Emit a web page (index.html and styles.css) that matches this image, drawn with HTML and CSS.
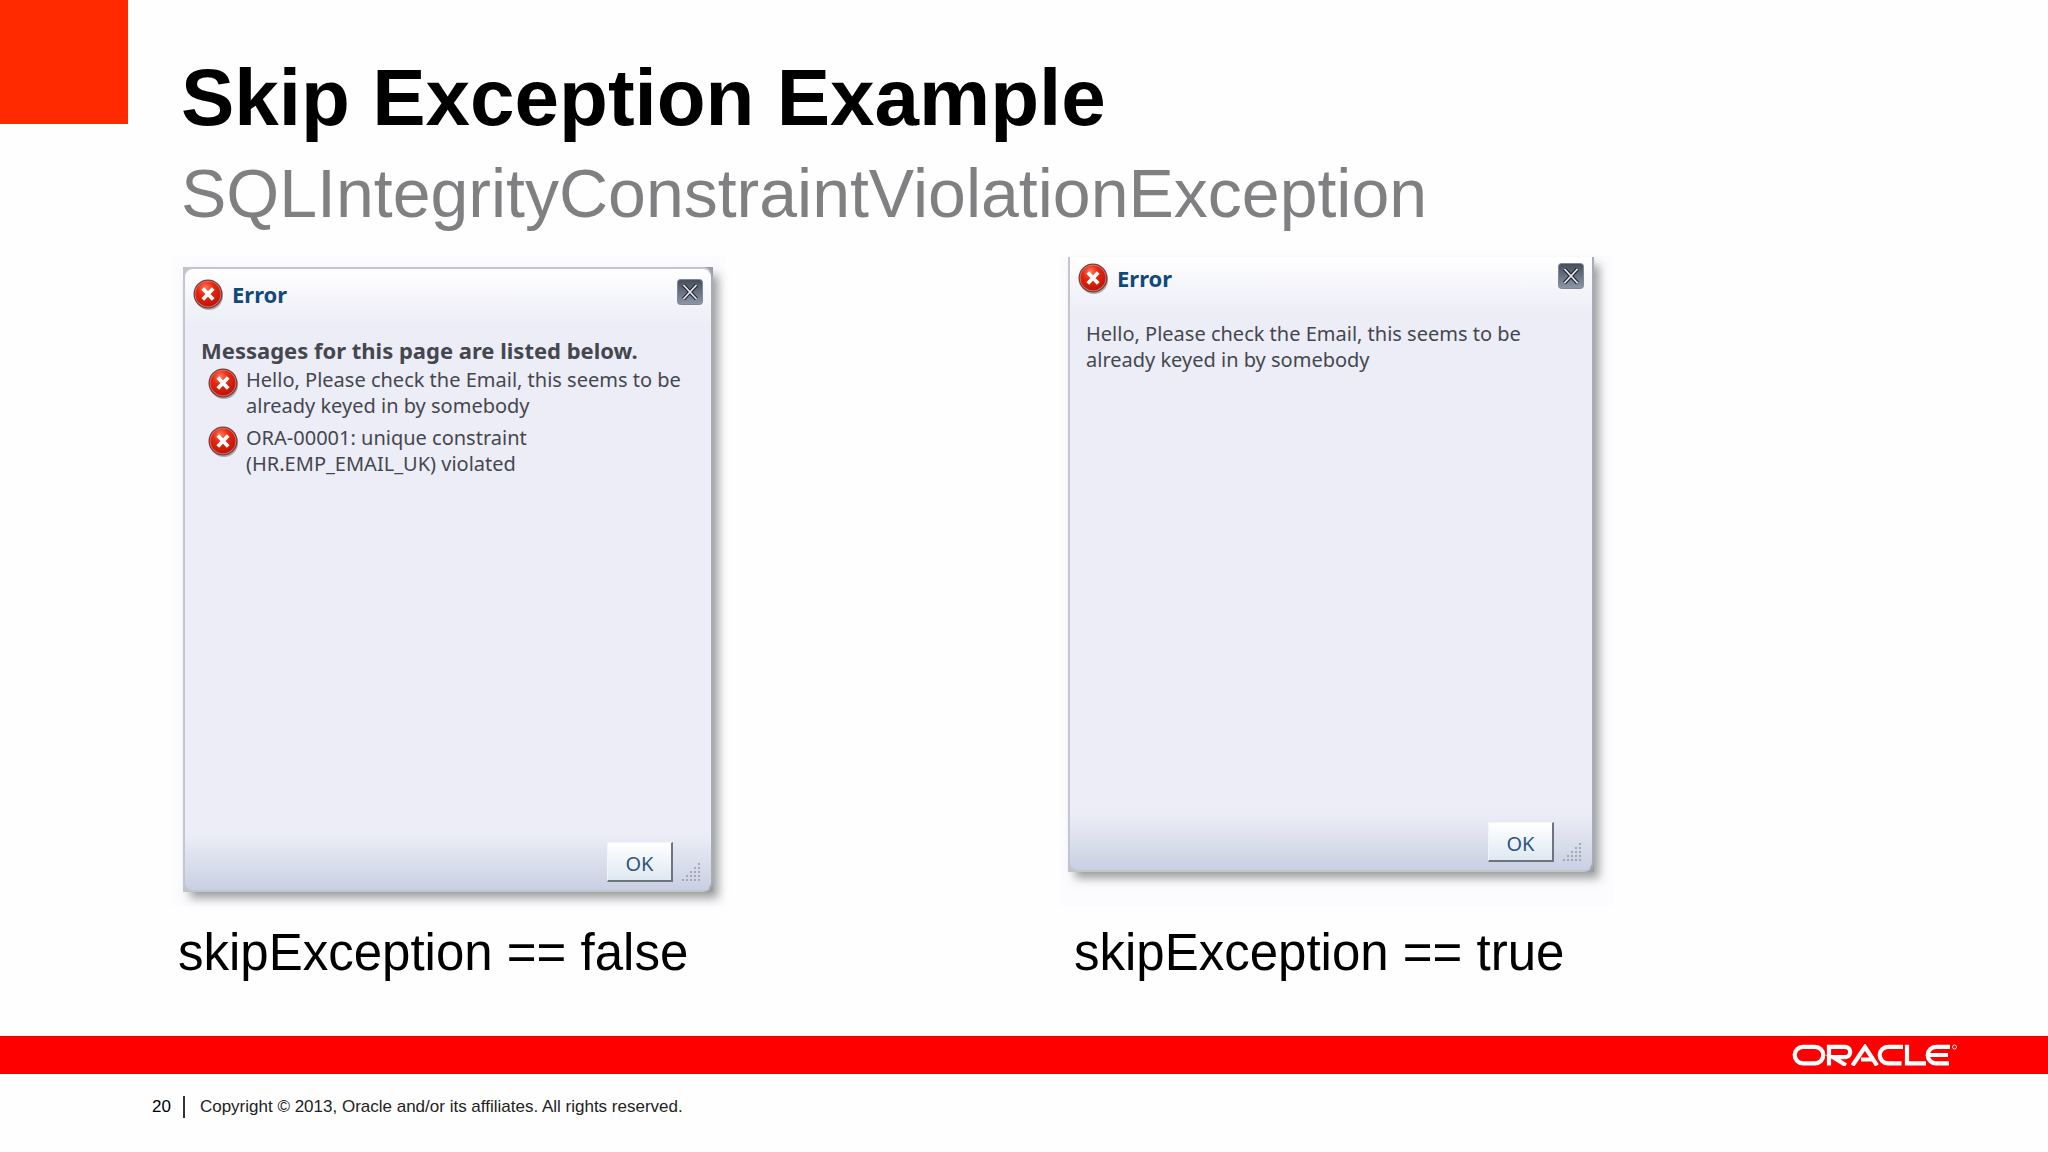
FILE: index.html
```html
<!DOCTYPE html>
<html lang="en">
<head>
<meta charset="utf-8">
<title>Skip Exception Example</title>
<link rel="stylesheet" href="styles.css">
</head>
<body>
<svg class="defs" aria-hidden="true">
  <defs>
    <radialGradient id="ball" cx="0.4" cy="0.25" r="0.8">
      <stop offset="0" stop-color="#ff7a5c"/>
      <stop offset="0.4" stop-color="#ea260c"/>
      <stop offset="1" stop-color="#b8120a"/>
    </radialGradient>
    <linearGradient id="closeFill" x1="0" y1="0" x2="0" y2="1">
      <stop offset="0" stop-color="#454c5a"/>
      <stop offset="1" stop-color="#8d97a8"/>
    </linearGradient>
    <symbol id="error" viewBox="0 0 32 32">
      <ellipse cx="17" cy="18" rx="14" ry="14" fill="#555" opacity="0.45"/>
      <circle cx="16" cy="16" r="14.5" fill="#7d3b3a"/>
      <circle cx="16" cy="16" r="13.2" fill="#dd8077"/>
      <circle cx="16" cy="16" r="12.5" fill="url(#ball)"/>
      <path d="M10.800 10.500l10.400 11M21.200 10.500l-10.400 11" stroke="#fff" stroke-width="3.800"/>
    </symbol>
    <symbol id="close" viewBox="0 0 26 26">
      <rect x="0.5" y="0.5" width="25" height="25" rx="3" fill="url(#closeFill)" stroke="#7d8798"/>
      <path d="M6.500 6l13 14M19.500 6l-13 14" stroke="#20242c" stroke-width="4"/>
      <path d="M6.500 6l13 14M19.500 6l-13 14" stroke="#e4e8ee" stroke-width="1.800"/>
    </symbol>
    <symbol id="grip" viewBox="0 0 20 20">
      <g stroke="#a4a8b4" stroke-width="2" stroke-dasharray="2 2">
        <path d="M2 19v-2M6 19v-6M10 19v-10M14 19v-14M18 19v-18"/>
      </g>
    </symbol>
  </defs>
</svg>
<main class="slide">
  <header class="head">
    <div class="corner"></div>
    <div class="titles">
      <h1 class="title">Skip Exception Example</h1>
      <p class="subtitle">SQLIntegrityConstraintViolationException</p>
    </div>
  </header>
  <div class="examples">
    <figure class="example">
      <div class="shot">
        <div class="frame">
          <section class="dialog">
            <div class="bar">
              <svg class="error-icon"><use href="#error"/></svg>
              <h2 class="bar-title">Error</h2>
              <button class="close" aria-label="Close"><svg class="close-icon"><use href="#close"/></svg></button>
            </div>
            <div class="body">
              <p class="lead">Messages for this page are listed below.</p>
              <ul class="messages">
                <li class="message"><svg class="error-icon"><use href="#error"/></svg><span>Hello, Please check the Email, this seems to be<br>already keyed in by somebody</span></li>
                <li class="message"><svg class="error-icon"><use href="#error"/></svg><span>ORA-00001: unique constraint<br>(HR.EMP_EMAIL_UK) violated</span></li>
              </ul>
            </div>
            <div class="actions">
              <button class="ok">OK</button>
              <svg class="grip"><use href="#grip"/></svg>
            </div>
          </section>
        </div>
      </div>
      <figcaption class="caption">skipException == false</figcaption>
    </figure>
    <figure class="example">
      <div class="shot shot-cropped">
        <div class="frame">
          <section class="dialog dialog-cropped">
            <div class="bar">
              <svg class="error-icon"><use href="#error"/></svg>
              <h2 class="bar-title">Error</h2>
              <button class="close" aria-label="Close"><svg class="close-icon"><use href="#close"/></svg></button>
            </div>
            <div class="body">
              <p class="text">Hello, Please check the Email, this seems to be<br>already keyed in by somebody</p>
            </div>
            <div class="actions">
              <button class="ok">OK</button>
              <svg class="grip"><use href="#grip"/></svg>
            </div>
          </section>
        </div>
      </div>
      <figcaption class="caption">skipException == true</figcaption>
    </figure>
  </div>
  <div class="band">
    <svg class="logo" viewBox="0 0 168 22" role="img" aria-label="Oracle">
      <g fill="none" stroke="#fff" stroke-width="4.200">
        <path d="M11 2.800h12a8.300 8.300 0 0 1 0 16.600h-12a8.300 8.300 0 0 1 0-16.600z"/>
        <path d="M37 21.500V2.800h16a5.200 5.200 0 0 1 0 10.400H41l13 8"/>
        <path d="M60.500 21.500L73 3L85 21.500M69 15.500h12"/>
        <path d="M111 2.800H96a8.300 8.300 0 0 0 0 16.600h13.500"/>
        <path d="M115 0.700v18.700h19"/>
        <path d="M158 2.800h-14a8.300 8.300 0 0 0 0 16.600h13M137 11h19"/>
      </g>
      <circle cx="162.500" cy="3" r="2" fill="none" stroke="#fff" stroke-width="0.900"/>
    </svg>
  </div>
  <footer class="foot">
    <span class="page">20</span>
    <span class="copy">Copyright © 2013, Oracle and/or its affiliates. All rights reserved.</span>
  </footer>
</main>
</body>
</html>
```
FILE: styles.css
```css
* { box-sizing: border-box; }
body { margin: 0; background: #fefefe; color: #000; font-family: "Liberation Sans", Arial, sans-serif; }
h1, h2, p, ul, figure { margin: 0; padding: 0; }
button { font: inherit; padding: 0; border: 0; }
svg { display: block; }
.defs { position: absolute; width: 0; height: 0; }

.slide { min-height: 100vh; display: flex; flex-direction: column; }
.head { display: flex; gap: 53px; height: 256px; }
.corner { width: 128px; height: 124px; background: #ff2a00; }
.titles { padding-top: 52px; }
.title { font-size: 80px; line-height: 92px; }
.subtitle { font-size: 68px; line-height: 98px; color: #808083; }

.examples { display: grid; grid-template-columns: 888px 1fr; padding-left: 172px; }
.shot { width: 553px; height: 650px; padding: 11px; background: #fcfcfe; }
.shot-cropped { padding: 1px 8px; }
.frame {
  width: 530px;
  background: linear-gradient(90deg, #c0c4cc, #9a9ea6);
  box-shadow: 6px 7px 9px -1px rgba(60, 64, 60, 0.5);
}
.shot-cropped .frame { width: 526px; }
.dialog {
  display: flex; flex-direction: column; height: 625px;
  border: 2px solid #c3c6ce; border-right-color: #a6abb5; border-radius: 10px;
  background: linear-gradient(#fff, #ecedf6 56px, #ecedf6 calc(100% - 56px), #c9d0e2);
  color: #45474f; font-family: "Noto Sans", sans-serif; font-size: 20px; line-height: 26px;
}
.dialog-cropped { height: 615px; border-top: 0; border-radius: 0 0 10px 10px; }
.bar { display: flex; align-items: center; gap: 8px; height: 50px; padding: 0 8px 0 7px; }
.dialog-cropped .bar { height: 42px; }
.error-icon { width: 32px; height: 32px; flex: none; }
.bar-title { font-size: 22px; color: #10497a; }
.close { width: 26px; height: 26px; margin: 0 0 4px auto; background: none; }
.close-icon { width: 26px; height: 26px; }
.body { flex: 1; padding: 16px; }
.dialog-cropped .body { padding-top: 22px; }
.lead { font-size: 22px; font-weight: 700; line-height: 30px; }
.messages { list-style: none; padding-top: 2px; }
.message { display: flex; gap: 7px; padding-left: 6px; margin-bottom: 6px; }
.actions { display: flex; justify-content: flex-end; align-items: flex-end; gap: 8px; padding: 0 10px 8px; }
.ok {
  width: 66px; height: 40px; padding-top: 4px;
  background: linear-gradient(#fff, #dfe8f2);
  border: 1px solid #f2f4f8; border-right: 2px solid #6c7480; border-bottom: 2px solid #6c7480;
  color: #2c5580;
}
.grip { width: 20px; height: 20px; }
.caption { padding: 16px 6px; font-size: 51px; line-height: 62px; }
.example + .example .caption { padding-left: 14px; }

.band { display: flex; justify-content: flex-end; align-items: center; height: 38px; margin-top: 36px; padding-right: 88px; background: #f00; }
.logo { width: 168px; height: 22px; }
.foot { display: flex; align-items: center; gap: 15px; padding: 22px 0 0 152px; font-size: 17px; line-height: 22px; color: #222; }
.page { padding-right: 12px; border-right: 2px solid #333; color: #000; }
```
